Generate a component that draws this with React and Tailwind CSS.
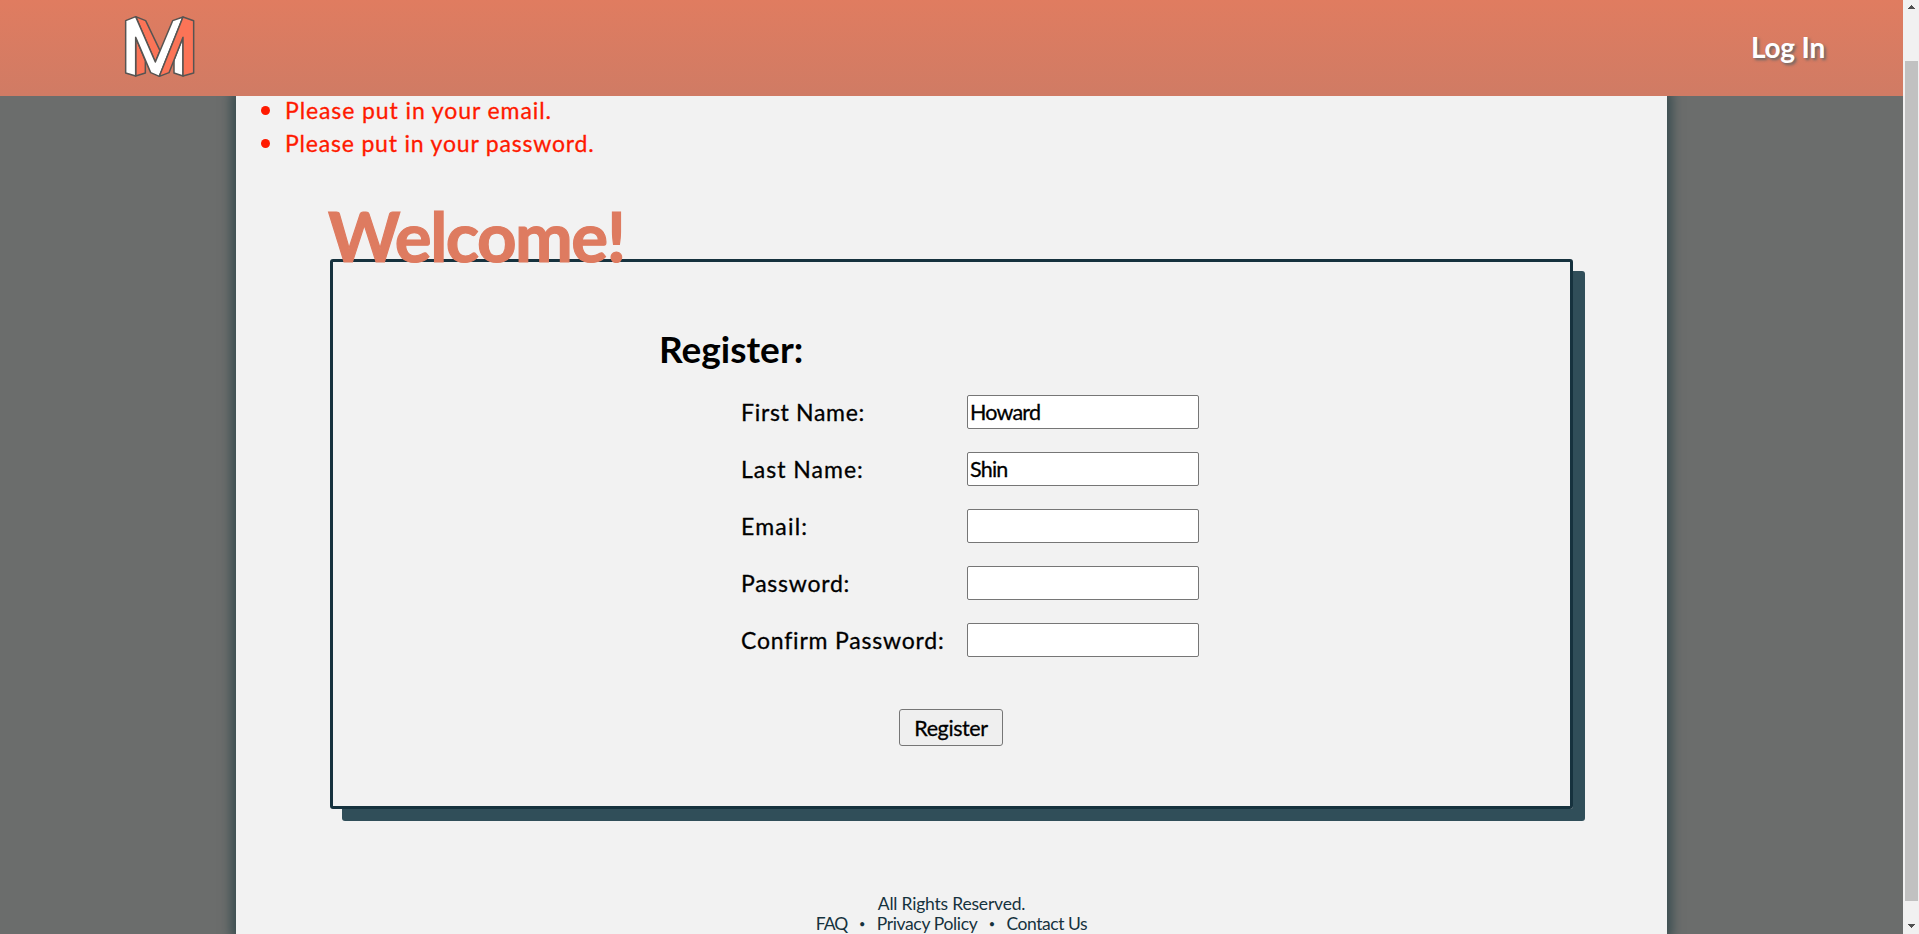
function Logo() {
  return (
    <svg className="mb-0.5" width="72" height="64" viewBox="72 45 216 192" stroke="#575452" strokeWidth="4.5" strokeLinejoin="round">
      <polygon points="107,50 137,62 180,152 166,186" fill="#fb7457" />
      <polygon points="107,112 136,182 136,219 107,228" fill="#fb7457" />
      <polygon points="77,62 107,50 166,186 218,62 249,51 178,229 152,218 107,112 107,228 77,219" fill="#fff" />
      <polygon points="249,112 222,180 222,219 249,228" fill="#fff" />
      <polygon points="249,51 281,62 281,219 249,228 249,112 207,218 178,229" fill="#fb7457" />
    </svg>
  );
}

const errors = [
  { text: "Please put in your email.", spacing: "tracking-[0.9px]" },
  { text: "Please put in your password.", spacing: "tracking-[0.81px]" },
];

const fields = [
  { label: "First Name:", value: "Howard", type: "text", spacing: "tracking-[0.7px]" },
  { label: "Last Name:", value: "Shin", type: "text", spacing: "tracking-[1px]" },
  { label: "Email:", value: "", type: "text", spacing: "tracking-[1.2px]" },
  { label: "Password:", value: "", type: "password", spacing: "tracking-[0.75px]" },
  { label: "Confirm Password:", value: "", type: "password", spacing: "tracking-[0.8px]" },
];

function Scrollbar() {
  return (
    <div className="flex h-full w-4 shrink-0 flex-col items-center bg-[#f1f1f1]">
      <svg width="16" height="17" viewBox="0 0 16 17" className="shrink-0" shapeRendering="crispEdges">
        <path d="M5 9h7L8.5 5z" fill="#505050" />
      </svg>
      <div className="mt-11 ml-px h-[840px] w-[13px] bg-[#c1c1c1]" />
      <svg width="16" height="17" viewBox="0 0 16 17" className="mt-auto shrink-0" shapeRendering="crispEdges">
        <path d="M5 7h7L8.5 11z" fill="#505050" />
      </svg>
    </div>
  );
}

export default function App() {
  return (
    <div className="flex h-[934px] w-[1919px] overflow-hidden bg-[#6b6d6c] font-['Lato',sans-serif] text-black">
      <div className="flex min-w-0 flex-1 flex-col">
        <header className="relative z-10 flex h-24 shrink-0 items-center justify-between bg-linear-to-b from-[#e07c60] to-[#d07b64] pr-[78px] pl-[124px]">
          <Logo />
          <a href="#" className="mb-0.5 text-[28px] leading-[34px] font-bold tracking-[-0.2px] text-white [text-shadow:2px_2px_3px_#666]">Log In</a>
        </header>
        <main className="ml-[236px] flex w-[1431px] flex-1 flex-col bg-[#f2f2f2] shadow-[0_0_10px_5px_#3a4d50]">
          <ul className="-mt-0.5 pl-[25px] text-[23px] leading-[33px] text-[#ff1a00] [-webkit-text-stroke:0.3px]">
            {errors.map((e) => (
              <li key={e.text} className="flex items-center">
                <span className="mr-[15px] size-[9px] rounded-full bg-[#ff1a00]" />
                <span className={e.spacing}>{e.text}</span>
              </li>
            ))}
          </ul>
          <h1 className="relative z-1 mt-[41px] ml-[92px] text-[69px] leading-[70px] font-bold tracking-[-1.5px] text-[#de7b60] [-webkit-text-stroke:1.2px]">Welcome!</h1>
          <section className="-mt-3 ml-[94px] h-[550px] w-[1243px] rounded-[3px] border-3 border-[#16323e] pt-[65px] shadow-[12px_12px_0_#304e59]">
            <h2 className="ml-[326px] text-[37px] leading-[44px] font-bold">Register:</h2>
            <form className="mt-6 [-webkit-text-stroke:0.3px]">
              <div className="ml-[408px] flex flex-col gap-[23px]">
                {fields.map((f) => (
                  <label key={f.label} className="flex h-[34px] items-center text-[23px]">
                    <span className={`w-[226px] whitespace-nowrap ${f.spacing}`}>{f.label}</span>
                    <input
                      type={f.type}
                      defaultValue={f.value}
                      className="h-[34px] w-[232px] rounded-[2px] border border-[#767676] bg-white px-0.5 text-[21.5px] tracking-[-0.8px]"
                    />
                  </label>
                ))}
              </div>
              <button type="button" className="mt-[52px] ml-[566px] h-[37px] w-[104px] rounded-[3px] border border-[#767676] bg-[#efefef] pt-px text-[21.5px] leading-[26px] tracking-[-0.4px]">
                Register
              </button>
            </form>
          </section>
          <footer className="mt-[85px] text-center text-[17.5px] leading-5 tracking-[-0.2px] text-[#16323e]">
            <p>All Rights Reserved.</p>
            <nav className="flex items-center justify-center gap-[11.5px]">
              <a href="#" className="tracking-[-0.9px]">FAQ</a>
              <span className="text-[11px]">•</span>
              <a href="#" className="tracking-[-0.35px]">Privacy Policy</a>
              <span className="text-[11px]">•</span>
              <a href="#" className="tracking-[-0.45px]">Contact Us</a>
            </nav>
          </footer>
        </main>
      </div>
      <Scrollbar />
    </div>
  );
}
